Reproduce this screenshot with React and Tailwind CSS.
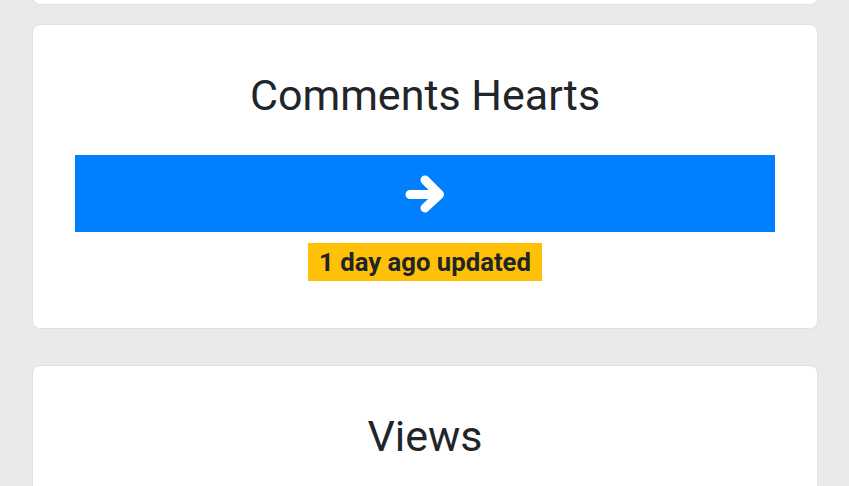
import React from "react";

function ArrowIcon() {
  return (
    <svg width="40" height="38" viewBox="0 0 40 38" fill="none">
      <path
        d="M5 19.5h29M20 5l14.5 14.5L20 33"
        stroke="white"
        strokeWidth="9"
        strokeLinecap="round"
        strokeLinejoin="round"
      />
    </svg>
  );
}

function Card({ title, children }) {
  return (
    <div className="bg-white border border-[#dfe1e4] rounded-lg pt-[42px] pb-[47px] px-[42px]">
      <h2 className="text-center text-[43px] leading-[56px] text-[#212529]">
        {title}
      </h2>
      {children}
    </div>
  );
}

export default function App() {
  return (
    <div
      className="min-h-screen bg-[#e9eaec] px-[32px] overflow-hidden"
      style={{ fontFamily: "Roboto, 'Liberation Sans', sans-serif" }}
    >
      <div className="flex flex-col gap-[19px] -mt-[196px] w-[786px]">
        {/* previous card, scrolled off */}
        <div className="bg-white border border-[#dfe1e4] rounded-lg h-[201px]"></div>

        <Card title="Comments Hearts">
          <div className="mt-[32px] h-[77px] bg-[#0080ff] flex items-center justify-center">
            <ArrowIcon />
          </div>
          <div className="flex justify-center mt-[11px]">
            <span className="bg-[#ffc107] text-[#212529] font-bold text-[25.7px] leading-[38px] px-[11px]">
              1 day ago updated
            </span>
          </div>
        </Card>

        <div className="mt-[17px]">
          <Card title="Views">
            <div className="h-[200px]"></div>
          </Card>
        </div>
      </div>
    </div>
  );
}
